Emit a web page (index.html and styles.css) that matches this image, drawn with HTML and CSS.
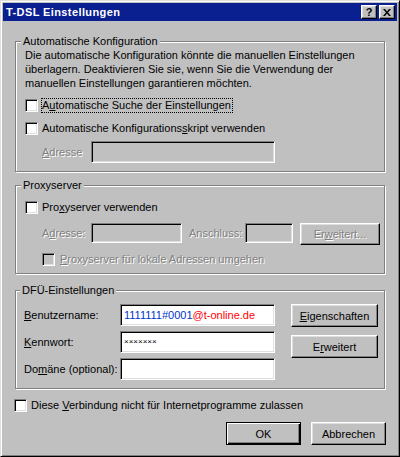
FILE: index.html
```html
<!DOCTYPE html>
<html lang="de">
<head>
<meta charset="utf-8">
<title>T-DSL Einstellungen</title>
<link rel="stylesheet" href="styles.css">
</head>
<body>
<div class="window">
  <div class="titlebar">
    <span class="title">T-DSL Einstellungen</span>
    <div class="tb-buttons">
      <span class="tbtn help">?</span>
      <span class="tbtn close"><svg width="8" height="7" viewBox="0 0 8 7"><path d="M0 0h2l2 2.4 2-2.4h2l-3 3.5 3 3.5h-2l-2-2.4-2 2.4h-2l3-3.5z" fill="#000"/></svg></span>
    </div>
  </div>
  <div class="content">
    <div class="group g1">
      <div class="legend">Automatische Konfiguration</div>
      <p class="desc">Die automatische Konfiguration könnte die manuellen Einstellungen<br>überlagern. Deaktivieren Sie sie, wenn Sie die Verwendung der<br>manuellen Einstellungen garantieren möchten.</p>
      <div class="check-row first"><span class="cb"></span><span class="lbl focus">A<u>u</u>tomatische Suche der Einstellungen</span></div>
      <div class="check-row second"><span class="cb"></span><span class="lbl">Automatische Konfigurations<u>s</u>kript verwenden</span></div>
      <div class="field-row auto-addr">
        <span class="flabel disabled addr-label"><u>A</u>dresse</span>
        <span class="input disabled-input auto-input"></span>
      </div>
    </div>

    <div class="group g2">
      <div class="legend">Proxyserver</div>
      <div class="check-row proxy-check"><span class="cb"></span><span class="lbl">Pro<u>x</u>yserver verwenden</span></div>
      <div class="field-row proxy-row">
        <span class="flabel disabled addr-label">A<u>d</u>resse:</span>
        <span class="input disabled-input proxy-addr"></span>
        <span class="flabel disabled port-label">Anschluss:</span>
        <span class="input disabled-input proxy-port"></span>
        <span class="btn disabled-btn proxy-btn">Er<u>w</u>eitert...</span>
      </div>
      <div class="check-row local-check"><span class="cb cb-disabled"></span><span class="lbl disabled local-lbl"><u>P</u>roxyserver für lokale Adressen umgehen</span></div>
    </div>

    <div class="group g3">
      <div class="legend">DFÜ-Einstellungen</div>
      <div class="dfu">
        <div class="dfu-fields">
          <div class="dfu-row"><span class="dlabel"><u>B</u>enutzername:</span><span class="input dinput"><span class="user-blue">1111111#0001</span><span class="user-red">@t-online.de</span></span></div>
          <div class="dfu-row"><span class="dlabel"><u>K</u>ennwort:</span><span class="input dinput"><span class="pw">×××××××</span></span></div>
          <div class="dfu-row"><span class="dlabel">Do<u>m</u>äne (optional):</span><span class="input dinput"></span></div>
        </div>
        <div class="dfu-buttons">
          <span class="btn dbtn"><u>E</u>igenschaften</span>
          <span class="btn dbtn">E<u>r</u>weitert</span>
        </div>
      </div>
    </div>

    <div class="check-row bottom-check"><span class="cb"></span><span class="lbl">Diese <u>V</u>erbindung nicht für Internetprogramme zulassen</span></div>

    <div class="actions">
      <span class="btn default-btn action-btn">OK</span>
      <span class="btn action-btn">Abbrechen</span>
    </div>
  </div>
</div>
</body>
</html>
```

FILE: styles.css
```css
* { box-sizing: border-box; }
html, body { margin: 0; padding: 0; }
body {
  width: 400px;
  height: 457px;
  overflow: hidden;
  background: #c0c0c0;
  font-family: "Liberation Sans", Arial, sans-serif;
  font-size: 11px;
  color: #000;
}
u { text-decoration: underline; text-underline-offset: 1px; }

.window {
  width: 400px;
  height: 457px;
  background: #c0c0c0;
  border: 1px solid;
  border-color: #dfdfdf #000 #000 #dfdfdf;
  box-shadow: inset 1px 1px #fff, inset -1px -1px #808080;
  padding: 2px 2px 2px 2px;
  display: flex;
  flex-direction: column;
}

.titlebar {
  height: 18px;
  flex: none;
  background: #0a2090;
  display: flex;
  align-items: center;
  justify-content: space-between;
  padding: 0 2px 0 2px;
}
.title {
  color: #fff;
  font-weight: bold;
  font-size: 11px;
  letter-spacing: 0.4px;
  padding-left: 1px;
}
.tb-buttons { display: flex; gap: 2px; }
.tbtn {
  width: 16px;
  height: 14px;
  background: #c0c0c0;
  border: 1px solid;
  border-color: #fff #000 #000 #fff;
  box-shadow: inset -1px -1px #808080, inset 1px 1px #dfdfdf;
  display: flex;
  align-items: center;
  justify-content: center;
}
.tbtn.help { font-weight: bold; font-size: 11px; line-height: 12px; padding-top: 0; }
.tbtn svg { display: block; }

.content {
  flex: 1;
  padding: 20px 12px 0 12px;
  display: flex;
  flex-direction: column;
}

.group {
  border: 1px solid #808080;
  box-shadow: inset 1px 1px #fff, 1px 1px #fff;
  padding: 0 8px 8px 9px;
}
.legend {
  width: fit-content;
  margin: -8px 0 0 -4px;
  padding: 0 2px;
  line-height: 14px;
  height: 14px;
  background: #c0c0c0;
}

.desc { margin: 0; line-height: 14px; white-space: nowrap; }

.check-row {
  display: flex;
  align-items: center;
  height: 17px;
  white-space: nowrap;
}
.cb {
  width: 13px;
  height: 13px;
  flex: none;
  background: #fff;
  border: 1px solid;
  border-color: #808080 #fff #fff #808080;
  box-shadow: inset 1px 1px #000, inset -1px -1px #dfdfdf;
  margin-right: 4px;
}
.cb-disabled { background: #c0c0c0; }
.lbl { line-height: 13px; }
.focus {
  border: 1px dotted #000;
  margin-left: -1px;
  padding-right: 1px;
}
.check-row.first { margin-top: 7px; }
.check-row.second { margin-top: 6px; }

.disabled { color: #808080; text-shadow: 1px 1px 0 #fff; }

.input {
  display: block;
  background: #fff;
  border: 1px solid;
  border-color: #808080 #fff #fff #808080;
  box-shadow: inset 1px 1px #000, inset -1px -1px #dfdfdf;
  flex: none;
}
.disabled-input { background: #c0c0c0; }

.field-row { display: flex; align-items: flex-start; white-space: nowrap; }
.flabel { flex: none; }
.auto-addr { margin-top: 4px; margin-left: 17px; }
.auto-addr .flabel { line-height: 22px; }
.addr-label { width: 49px; }
.auto-input { width: 184px; height: 22px; }

.g2 { margin-top: 13px; padding-bottom: 5px; }
.proxy-check { margin-top: 7px; }
.proxy-row { margin-top: 7px; margin-left: 17px; }
.proxy-row .flabel { line-height: 20px; }
.proxy-addr { width: 91px; height: 20px; }
.port-label { width: 56px; margin-left: 7px; }
.proxy-port { width: 48px; height: 20px; }
.proxy-btn { width: 80px; height: 22px; margin-left: 7px; }
.local-check { margin-top: 6px; margin-left: 17px; }
.local-lbl { margin-left: 1px; }

.btn {
  display: flex;
  align-items: center;
  justify-content: center;
  background: #c0c0c0;
  border: 1px solid;
  border-color: #fff #000 #000 #fff;
  box-shadow: inset -1px -1px #808080, inset 1px 1px #dfdfdf;
  white-space: nowrap;
  flex: none;
}
.disabled-btn { color: #808080; text-shadow: 1px 1px 0 #fff; }

.g3 { margin-top: 16px; padding: 0 8px 8px 8px; }
.dfu { display: flex; margin-top: 7px; }
.dfu-fields { display: flex; flex-direction: column; gap: 5px; }
.dfu-row { display: flex; align-items: center; }
.dlabel { width: 96px; white-space: nowrap; }
.dinput {
  width: 155px;
  height: 22px;
  padding: 0 3px;
  display: flex;
  align-items: center;
  white-space: nowrap;
}
.user-blue { color: #0033cc; }
.user-red { color: #ff0000; }
.pw { font-size: 8px; letter-spacing: 0px; line-height: 8px; }
.dfu-buttons {
  display: flex;
  flex-direction: column;
  gap: 8px;
  margin-left: 16px;
}
.dbtn { width: 87px; height: 23px; }

.bottom-check { margin-top: 8px; margin-left: -1px; }

.actions {
  display: flex;
  justify-content: flex-end;
  gap: 10px;
  margin-top: 8px;
  margin-right: -1px;
}
.action-btn { width: 75px; height: 23px; }
.default-btn {
  border-color: #000;
  box-shadow: inset 1px 1px #fff, inset -1px -1px #000, inset -2px -2px #808080;
}
```
